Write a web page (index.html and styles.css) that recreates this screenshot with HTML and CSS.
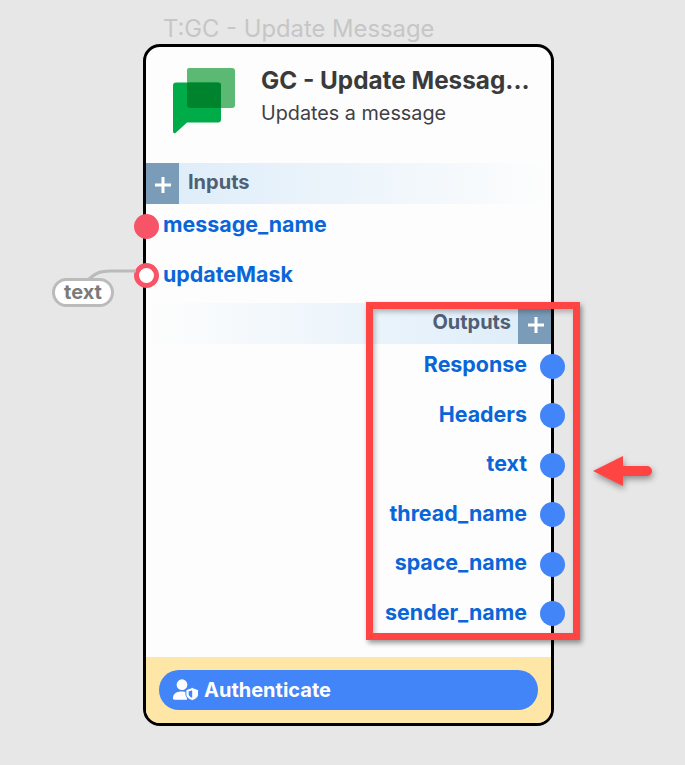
FILE: index.html
```html
<!doctype html>
<html>
<head>
  <meta charset="utf8">
  <title>GC - Update Message</title>
  <link rel="stylesheet" href="styles.css">
</head>
<body>
  <div class="stage">
    <div class="nodeName">T:GC - Update Message</div>

    <div class="node">
      <div class="nodeHead">
        <svg class="logo" width="64" height="66" viewBox="0 0 64 66">
          <path fill="#5bb974" d="M16 0h43a3 3 0 0 1 3 3v34a3 3 0 0 1-3 3H17a3 3 0 0 1-3-3V2a2 2 0 0 1 2-2z"/>
          <path fill="#00ac47" d="M3 14.500h42a3 3 0 0 1 3 3v34a3 3 0 0 1-3 3H14L2.500 65C1.500 65.800 0 65.100 0 63.500V17.500a3 3 0 0 1 3-3z"/>
          <path fill="#00832d" d="M16 14.500h29a3 3 0 0 1 3 3V40H17a3 3 0 0 1-3-3V16.500a2 2 0 0 1 2-2z"/>
        </svg>
        <div class="headText">
          <div class="nodeTitle">GC - Update Messag...</div>
          <div class="nodeDesc">Updates a message</div>
        </div>
      </div>

      <div class="bar barIn">
        <span class="addBtn"><svg width="16" height="16" viewBox="0 0 16 16"><path d="M8 0v16M0 8h16" stroke="#fff" stroke-width="3"/></svg></span>
        <span class="barLabel">Inputs</span>
      </div>
      <div class="ports portsIn">
        <div class="port"><i class="dot dotReq"></i>message_name</div>
        <div class="port"><i class="dot dotOpen"></i>updateMask</div>
      </div>

      <div class="bar barOut">
        <span class="barLabel">Outputs</span>
        <span class="addBtn"><svg width="16" height="16" viewBox="0 0 16 16"><path d="M8 0v16M0 8h16" stroke="#fff" stroke-width="3"/></svg></span>
      </div>
      <div class="ports portsOut">
        <div class="port">Response<i class="dot dotOut"></i></div>
        <div class="port">Headers<i class="dot dotOut"></i></div>
        <div class="port">text<i class="dot dotOut"></i></div>
        <div class="port">thread_name<i class="dot dotOut"></i></div>
        <div class="port">space_name<i class="dot dotOut"></i></div>
        <div class="port">sender_name<i class="dot dotOut"></i></div>
      </div>

      <div class="nodeFoot">
        <div class="authBtn">
          <svg width="26" height="22" viewBox="0 0 26 22">
            <circle cx="9" cy="5.700" r="5.400" fill="#fff"/>
            <path fill="#fff" d="M0 19c0-4.500 4-6.500 8.500-6.500 2 0 4 .4 5.500 1.200v7.100H1.500A1.500 1.500 0 0 1 0 19.300z"/>
            <path fill="#fff" stroke="#4285f8" d="M19.200 8.500l6.300 2.300v4.400c0 3-2.600 5.200-6.300 6.300-3.700-1.100-6.300-3.300-6.300-6.300v-4.400z"/>
            <path fill="#4285f8" d="M19.200 11.300v7.500c-2-.7-3.600-2-3.600-3.800v-2.400z"/>
          </svg>
          Authenticate
        </div>
      </div>
    </div>

    <svg class="wire" width="60" height="20" viewBox="0 0 60 20"><path d="M5 17C12 11 16 9 26 9H52" fill="none" stroke="#bbb" stroke-width="3"/></svg>
    <div class="valuePill">text</div>

    <div class="callout"></div>
    <svg class="arrow" width="70" height="44" viewBox="0 0 70 44"><path fill="#ff4444" d="M3 19L33 4v10h24a5 5 0 0 1 0 10H33v10z"/></svg>
  </div>
</body>
</html>
```

FILE: styles.css
```css
html, body {
  margin: 0;
  padding: 0;
  background: #e7e7e7;
  font-family: Inter, "Liberation Sans", sans-serif;
}
.stage {
  position: relative;
  width: 685px;
  height: 765px;
  overflow: hidden;
  padding: 16px 0 0 143px;
  box-sizing: border-box;
}
.nodeName {
  margin-left: 20px;
  height: 28px;
  line-height: 26px;
  font-size: 23.800px;
  color: #c6c6c6;
}
.node {
  position: relative;
  box-sizing: border-box;
  display: flex;
  flex-direction: column;
  width: 411px;
  height: 682px;
  border: 3px solid #000;
  border-radius: 17px;
  background: #fdfdfd;
}
.nodeHead {
  display: flex;
  height: 116px;
  box-sizing: border-box;
  padding: 20.500px 0 0 27px;
}
.logo {
  flex: none;
}
.headText {
  margin-left: 24px;
  min-width: 0;
}
.nodeTitle {
  white-space: nowrap;
  font-size: 24.300px;
  font-weight: 700;
  line-height: 28px;
  margin-top: -2px;
  color: #3a3a3a;
}
.nodeDesc {
  margin-top: 7px;
  font-size: 19.800px;
  line-height: 24px;
  color: #3f3f46;
}
.bar {
  display: flex;
  align-items: center;
  height: 41px;
  flex: none;
}
.barIn {
  background: linear-gradient(90deg, #dcecf9, #fdfdfd);
}
.barOut {
  justify-content: flex-end;
  background: linear-gradient(90deg, #fdfdfd, #dcecf9);
}
.addBtn {
  display: flex;
  align-items: center;
  justify-content: center;
  width: 33px;
  height: 41px;
  background: #7a9cb8;
}
.addBtn svg {
  margin-top: 2px;
}
.barOut .addBtn svg {
  margin: 3px 0 0 2px;
}
.barLabel {
  margin: -3px 7px 0 9px;
  font-size: 20px;
  font-weight: 700;
  color: #4f5f75;
}
.ports {
  display: flex;
  flex-direction: column;
  gap: 7.500px;
  font-size: 21.400px;
  font-weight: 700;
  color: #0a66d8;
}
.portsIn {
  height: 99px;
  flex: none;
  padding-left: 17px;
}
.portsOut {
  flex: 1;
  align-items: flex-end;
  padding-right: 24px;
}
.port {
  position: relative;
  height: 42px;
  line-height: 41px;
  flex: none;
}
.dot {
  position: absolute;
  top: 9.500px;
  width: 25px;
  height: 25px;
  box-sizing: border-box;
  border-radius: 50%;
}
.dotReq {
  left: -29px;
  background: #f75468;
}
.dotOpen {
  left: -29px;
  background: #fff;
  border: 5px solid #f75468;
}
.dotOut {
  right: -38px;
  background: #4285f8;
}
.nodeFoot {
  flex: none;
  height: 66px;
  box-sizing: border-box;
  padding: 13px 13px 0;
  background: #fee6a6;
  border-radius: 0 0 14px 14px;
}
.authBtn {
  display: flex;
  align-items: center;
  gap: 5px;
  height: 40px;
  padding-left: 14px;
  border-radius: 20px;
  background: #4285f8;
  color: #fff;
  font-size: 20px;
  font-weight: 700;
}
/* things that sit over the node */
.wire {
  position: absolute;
  left: 84px;
  top: 262px;
}
.valuePill {
  position: absolute;
  left: 52px;
  top: 278px;
  box-sizing: border-box;
  width: 62px;
  height: 29px;
  border: 3px solid #bbb;
  border-radius: 15px;
  background: #fff;
  color: #7a7a7a;
  font-size: 20px;
  font-weight: 700;
  line-height: 22px;
  text-align: center;
}
.callout {
  position: absolute;
  left: 366px;
  top: 302px;
  box-sizing: border-box;
  width: 214px;
  height: 338px;
  border: 7px solid #ff4444;
  box-shadow: 2px 3px 5px rgba(0, 0, 0, .4), inset 2px 3px 5px rgba(0, 0, 0, .25);
}
.arrow {
  position: absolute;
  left: 590px;
  top: 452px;
  filter: drop-shadow(1px 3px 3px rgba(0, 0, 0, .4));
}
```
